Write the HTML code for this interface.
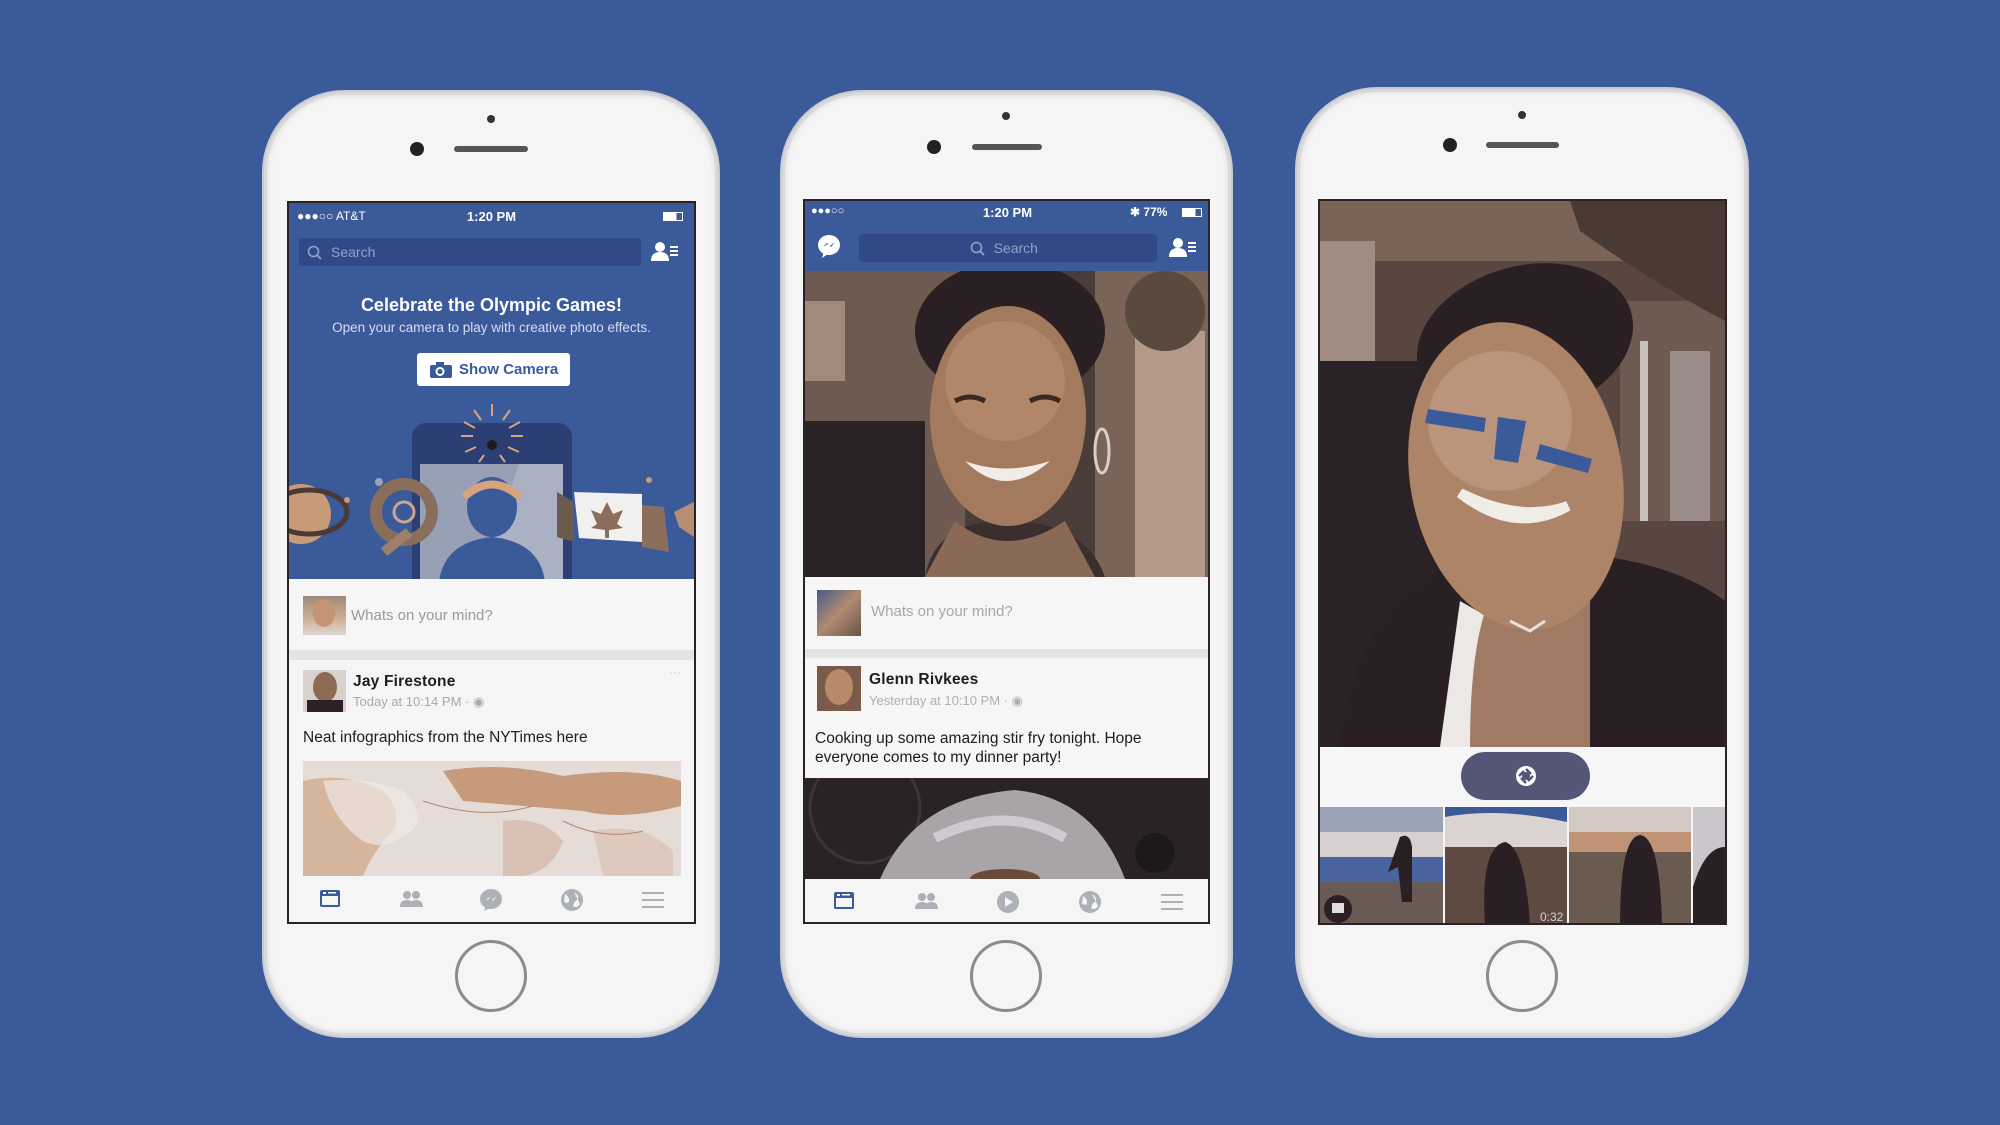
<!DOCTYPE html>
<html><head><meta charset="utf-8"><style>
*{margin:0;padding:0;box-sizing:border-box}
body{width:2000px;height:1125px;background:#3b5a9a;position:relative;overflow:hidden;font-family:"Liberation Sans",sans-serif}
.abs{position:absolute}
.phone{position:absolute;background:#f5f5f5;border:3px solid #d9d9dc;border-radius:80px;box-shadow:0 0 0 2px #c9cbd2, inset 0 0 6px #ddd}
.screen{position:absolute;background:#f5f5f5;border:2px solid #2a2224;overflow:hidden}
.cam{position:absolute;width:14px;height:14px;border-radius:50%;background:#222;}
.dot{position:absolute;width:8px;height:8px;border-radius:50%;background:#333}
.spk{position:absolute;height:6px;border-radius:3px;background:#555}
.home{position:absolute;width:72px;height:72px;border-radius:50%;border:3px solid #8a8a90}
.stat{position:absolute;color:#fff;font-size:13px;font-weight:bold}
.sep{position:absolute;left:0;right:0;height:10px;background:#e4e4e6}
</style></head><body>

<!-- PHONE 1 -->
<div class="phone" style="left:264px;top:92px;width:454px;height:944px"></div>
<div class="dot" style="left:487px;top:115px"></div>
<div class="cam" style="left:410px;top:142px"></div>
<div class="spk" style="left:454px;top:146px;width:74px"></div>
<div class="home" style="left:455px;top:940px"></div>
<div class="screen" style="left:287px;top:201px;width:409px;height:723px">
  <div class="abs" style="left:0;top:0;width:405px;height:376px;background:#3b5a9a"></div>
  <div class="stat" style="left:8px;top:6px;font-weight:normal;font-size:12px">●●●○○ AT&amp;T</div>
  <div class="stat" style="left:0;width:405px;text-align:center;top:6px">1:20 PM</div>
  <div class="abs" style="left:374px;top:9px;width:20px;height:9px;border:1px solid #fff;background:linear-gradient(90deg,#fff 70%,transparent 70%)"></div>
  <div class="abs" style="left:10px;top:35px;width:342px;height:28px;background:#2f4a86;border-radius:3px;color:#8fa3cc;font-size:14px;line-height:28px;padding-left:32px">Search</div>
  <svg class="abs" style="left:18px;top:42px" width="16" height="16"><circle cx="6.5" cy="6.5" r="5" fill="none" stroke="#8fa3cc" stroke-width="1.6"/><path d="M10 10 L14 14" stroke="#8fa3cc" stroke-width="1.8"/></svg>
  <svg class="abs" style="left:362px;top:38px" width="28" height="22"><circle cx="9" cy="6" r="5" fill="#fff"/><path d="M0 20 Q0 11 9 11 Q18 11 18 20Z" fill="#fff"/><rect x="19" y="5" width="8" height="2" fill="#fff"/><rect x="19" y="9" width="8" height="2" fill="#fff"/><rect x="19" y="13" width="8" height="2" fill="#fff"/></svg>
  <div class="abs" style="left:0;width:405px;top:92px;text-align:center;color:#fff;font-weight:bold;font-size:18px">Celebrate the Olympic Games!</div>
  <div class="abs" style="left:0;width:405px;top:117px;text-align:center;color:#d7def0;font-size:13.5px">Open your camera to play with creative photo effects.</div>
  <div class="abs" style="left:128px;top:150px;width:153px;height:33px;background:#fff;border-radius:3px;color:#3b5a9a;font-weight:bold;font-size:15px;line-height:33px;padding-left:42px">Show Camera</div>
  <svg class="abs" style="left:140px;top:158px" width="24" height="18"><rect x="1" y="4" width="22" height="13" rx="2" fill="#3b5a9a"/><rect x="7" y="1" width="8" height="4" fill="#3b5a9a"/><circle cx="11" cy="10.5" r="4.5" fill="#fff"/><circle cx="11" cy="10.5" r="2.5" fill="#3b5a9a"/></svg>
  <svg class="abs" style="left:0;top:199px" width="405" height="177">
    <rect x="123" y="21" width="160" height="170" rx="14" fill="#2c3f75"/>
    <rect x="131" y="62" width="143" height="120" fill="#97a0b4"/>
    <path d="M230 62 L274 62 L274 180 L190 180Z" fill="#aab1c2"/>
    <circle cx="203" cy="43" r="5" fill="#1e1a1e"/>
    <g stroke="#d8a37c" stroke-width="2"><path d="M203 2V14M185 8L192 18M221 8L214 18M175 20L186 26M231 20L220 26M172 34H184M234 34H222M176 50L187 45M230 50L219 45M190 60L195 53M216 60L211 53"/></g>
    <ellipse cx="203" cy="105" rx="25" ry="30" fill="#3b5a9a"/>
    <path d="M150 180 Q155 140 203 135 Q251 140 256 180Z" fill="#3b5a9a"/>
    <path d="M175 95 Q203 70 231 95" stroke="#d8a37c" stroke-width="8" fill="none"/>
    <circle cx="12" cy="112" r="30" fill="#c89a78"/>
    <ellipse cx="20" cy="110" rx="38" ry="22" fill="none" stroke="#4a3a34" stroke-width="5"/>
    <circle cx="115" cy="110" r="28" fill="none" stroke="#8a6e5c" stroke-width="12"/>
    <circle cx="115" cy="110" r="10" fill="none" stroke="#c9a58a" stroke-width="3"/>
    <path d="M95 150 L120 130" stroke="#a07f6a" stroke-width="10"/>
    <path d="M268 90 L285 100 L285 140 L268 135Z" fill="#6d5a4e"/>
    <path d="M285 90 L353 92 L353 140 L290 136Z" fill="#f2f0ee"/>
    <path d="M353 103 L375 105 L380 150 L353 145Z" fill="#8b6e5c"/>
    <path d="M318 100 L324 112 L334 108 L328 122 L334 126 L320 128 L320 136 L316 136 L316 128 L302 126 L308 122 L302 108 L312 112Z" fill="#8b6e5c"/>
    <path d="M385 110 L405 100 L405 135 L390 125Z" fill="#b88e72"/>
    <circle cx="90" cy="80" r="4" fill="#a0a3b8"/><circle cx="58" cy="98" r="3" fill="#c89a78"/><circle cx="360" cy="78" r="3" fill="#c89a78"/>
  </svg>
  <div class="abs" style="left:0;top:376px;width:405px;height:71px;background:#f6f6f6"></div>
  <div class="abs" style="left:14px;top:393px;width:43px;height:39px;background:linear-gradient(180deg,#9d8a7c,#c9a98e 50%,#dcd6d2)"></div>
  <div class="abs" style="left:24px;top:396px;width:22px;height:28px;border-radius:50%;background:#c49474"></div>
  <div class="abs" style="left:62px;top:404px;color:#9a9a9e;font-size:15px">Whats on your mind?</div>
  <div class="sep" style="top:447px"></div>
  <div class="abs" style="left:14px;top:467px;width:43px;height:42px;background:#d9d2cc;overflow:hidden">
    <div class="abs" style="left:10px;top:2px;width:24px;height:30px;border-radius:50%;background:#8d6a54"></div>
    <div class="abs" style="left:4px;top:30px;width:36px;height:12px;background:#2a2226"></div>
  </div>
  <div class="abs" style="left:64px;top:470px;color:#1d1d1f;font-size:15.5px;font-weight:bold;letter-spacing:.2px">Jay Firestone</div>
  <div class="abs" style="left:64px;top:491px;color:#a8a8ac;font-size:13px">Today at 10:14 PM · ◉</div>
  <div class="abs" style="left:380px;top:462px;color:#ccc;font-size:12px">···</div>
  <div class="abs" style="left:14px;top:526px;color:#1d1d1f;font-size:15.5px">Neat infographics from the NYTimes here</div>
  <svg class="abs" style="left:14px;top:558px" width="378" height="115">
    <rect width="378" height="115" fill="#e5dcd8"/>
    <path d="M0 20 Q40 10 80 30 Q100 50 90 70 Q70 90 60 115 L0 115Z" fill="#d6b59d"/>
    <path d="M140 10 Q200 0 260 15 Q330 5 378 20 L378 45 Q320 60 280 50 Q220 45 160 40Z" fill="#c89a7c"/>
    <path d="M20 20 Q60 15 100 30 Q130 60 100 75 Q80 90 60 80 Q30 60 20 20Z" fill="#f0e8e5" opacity=".7"/>
    <path d="M200 60 Q240 55 260 80 Q250 110 220 115 L200 115Z" fill="#d8c1b4"/>
    <path d="M290 70 Q340 60 370 90 L370 115 L300 115Z" fill="#ddc9bd"/>
    <path d="M120 40 Q180 60 230 45 M260 60 Q300 80 340 70" stroke="#b08870" fill="none"/>
  </svg>
  <svg class="abs" style="left:0;top:676px" width="405" height="45">
    <g transform="translate(31,11)"><rect x="0" y="0" width="20" height="17" rx="2" fill="#3b5a9a"/><rect x="2" y="6" width="16" height="9" fill="#f5f5f5"/><rect x="3" y="2" width="3" height="2" fill="#fff"/><rect x="8" y="2" width="8" height="1.5" fill="#fff"/></g>
    <g transform="translate(112,12)" fill="#aeb0b8"><circle cx="6" cy="4" r="4"/><path d="M-1 16 Q-1 9 6 9 Q13 9 13 16Z"/><circle cx="15" cy="4" r="4"/><path d="M9 16 Q9 9 15 9 Q22 9 22 16Z"/></g>
    <g transform="translate(191,10)"><ellipse cx="11" cy="10" rx="11" ry="10" fill="#aeb0b8"/><path d="M4 22 L6 16 L10 19Z" fill="#aeb0b8"/><path d="M5 12 L9 8 L12 11 L17 7 L13 12 L10 9Z" fill="#f5f5f5"/></g>
    <g transform="translate(272,10)"><circle cx="11" cy="11" r="11" fill="#aeb0b8"/><path d="M4 5 Q9 8 8 13 Q5 15 3 12Z M13 3 Q18 6 17 10 Q13 12 12 17 Q16 20 19 15" fill="#f5f5f5"/></g>
    <g transform="translate(353,13)" fill="#aeb0b8"><rect width="22" height="2"/><rect y="7" width="22" height="2"/><rect y="14" width="22" height="2"/></g>
  </svg>
</div>

<!-- PHONE 2 -->
<div class="phone" style="left:782px;top:92px;width:449px;height:944px"></div>
<div class="dot" style="left:1002px;top:112px"></div>
<div class="cam" style="left:927px;top:140px"></div>
<div class="spk" style="left:972px;top:144px;width:70px"></div>
<div class="home" style="left:970px;top:940px"></div>
<div class="screen" style="left:803px;top:199px;width:407px;height:725px">
  <div class="abs" style="left:0;top:0;width:405px;height:70px;background:#3b5a9a"></div>
  <div class="stat" style="left:6px;top:4px;font-weight:normal;font-size:11px">●●●○○</div>
  <div class="stat" style="left:0;width:405px;text-align:center;top:4px">1:20 PM</div>
  <div class="stat" style="left:325px;top:4px;font-size:12px">✱ 77%</div>
  <div class="abs" style="left:377px;top:7px;width:20px;height:9px;border:1px solid #fff;background:linear-gradient(90deg,#fff 70%,transparent 70%)"></div>
  <div class="abs" style="left:54px;top:33px;width:298px;height:28px;background:#2f4a86;border-radius:3px;color:#8fa3cc;font-size:14px;line-height:28px;text-align:center">&nbsp;&nbsp;&nbsp;&nbsp;Search</div>
  <svg class="abs" style="left:165px;top:40px" width="16" height="16"><circle cx="6.5" cy="6.5" r="5" fill="none" stroke="#8fa3cc" stroke-width="1.6"/><path d="M10 10 L14 14" stroke="#8fa3cc" stroke-width="1.8"/></svg>
  <svg class="abs" style="left:13px;top:33px" width="24" height="26"><ellipse cx="11" cy="11" rx="11" ry="10" fill="#fff"/><path d="M4 24 L6 17 L10 20Z" fill="#fff"/><path d="M5 13 L9 9 L12 12 L17 8 L13 13 L10 10Z" fill="#3b5a9a"/></svg>
  <svg class="abs" style="left:364px;top:36px" width="28" height="22"><circle cx="9" cy="6" r="5" fill="#fff"/><path d="M0 20 Q0 11 9 11 Q18 11 18 20Z" fill="#fff"/><rect x="19" y="5" width="8" height="2" fill="#fff"/><rect x="19" y="9" width="8" height="2" fill="#fff"/><rect x="19" y="13" width="8" height="2" fill="#fff"/></svg>
  <svg class="abs" style="left:0;top:70px" width="405" height="306">
    <rect width="405" height="306" fill="#4a3c38"/>
    <rect x="0" y="0" width="160" height="306" fill="#6e5a50"/>
    <rect x="0" y="150" width="120" height="156" fill="#2b2226"/>
    <rect x="290" y="0" width="115" height="306" fill="#7a6458"/>
    <rect x="330" y="60" width="70" height="246" fill="#b39a8a"/>
    <circle cx="360" cy="40" r="40" fill="#5a4a3e"/>
    <rect x="0" y="30" width="40" height="80" fill="#a08a7c"/>
    <path d="M120 306 Q130 250 200 250 Q280 250 300 306Z" fill="#3a2e2e"/>
    <ellipse cx="205" cy="60" rx="95" ry="70" fill="#2a2024"/>
    <ellipse cx="203" cy="145" rx="78" ry="110" fill="#a47a5e"/>
    <ellipse cx="200" cy="110" rx="60" ry="60" fill="#b48a6c" opacity=".8"/>
    <path d="M150 130 Q165 122 180 130 M225 130 Q240 122 255 130" stroke="#3a2a24" stroke-width="5" fill="none"/>
    <path d="M160 190 Q200 230 245 190 Q200 205 160 190Z" fill="#f2ece8"/>
    <path d="M150 250 Q200 290 260 250 L290 306 L120 306Z" fill="#8a6a56"/>
    <ellipse cx="297" cy="180" rx="7" ry="22" fill="none" stroke="#d8d0c8" stroke-width="3"/>
  </svg>
  <div class="abs" style="left:0;top:376px;width:405px;height:72px;background:#f6f6f6"></div>
  <div class="abs" style="left:12px;top:389px;width:44px;height:46px;background:linear-gradient(135deg,#4a5a8a,#b08a70 50%,#6a5448)"></div>
  <div class="abs" style="left:66px;top:402px;color:#a8a8ac;font-size:15px">Whats on your mind?</div>
  <div class="sep" style="top:448px;height:9px"></div>
  <div class="abs" style="left:0;top:457px;width:405px;height:120px;background:#f6f6f6"></div>
  <div class="abs" style="left:12px;top:465px;width:44px;height:45px;background:#7a5a48"></div>
  <div class="abs" style="left:20px;top:468px;width:28px;height:36px;border-radius:50%;background:#b88a6a"></div>
  <div class="abs" style="left:64px;top:470px;color:#1d1d1f;font-size:15.5px;font-weight:bold;letter-spacing:.2px">Glenn Rivkees</div>
  <div class="abs" style="left:64px;top:492px;color:#b0b0b4;font-size:13px">Yesterday at 10:10 PM · ◉</div>
  <div class="abs" style="left:10px;top:528px;color:#1d1d1f;font-size:15.5px;line-height:19px">Cooking up some amazing stir fry tonight. Hope<br>everyone comes to my dinner party!</div>
  <svg class="abs" style="left:0;top:577px" width="405" height="101">
    <rect width="405" height="101" fill="#2a2226"/>
    <circle cx="60" cy="30" r="55" fill="none" stroke="#3c3438" stroke-width="3"/>
    <path d="M75 101 Q110 20 210 12 Q290 20 320 101Z" fill="#a9a4a8"/>
    <path d="M130 60 Q200 25 260 60" stroke="#e6e6ea" stroke-width="10" fill="none" opacity=".6"/>
    <ellipse cx="200" cy="101" rx="35" ry="10" fill="#6a4a38"/>
    <circle cx="350" cy="75" r="20" fill="#1d181a"/>
  </svg>
  <svg class="abs" style="left:0;top:678px" width="405" height="45">
    <rect width="405" height="45" fill="#f5f5f5"/>
    <g transform="translate(29,13)"><rect x="0" y="0" width="20" height="17" rx="2" fill="#3b5a9a"/><rect x="2" y="6" width="16" height="9" fill="#f5f5f5"/><rect x="3" y="2" width="3" height="2" fill="#fff"/><rect x="8" y="2" width="8" height="1.5" fill="#fff"/></g>
    <g transform="translate(111,14)" fill="#aeb0b8"><circle cx="6" cy="4" r="4"/><path d="M-1 16 Q-1 9 6 9 Q13 9 13 16Z"/><circle cx="15" cy="4" r="4"/><path d="M9 16 Q9 9 15 9 Q22 9 22 16Z"/></g>
    <g transform="translate(192,12)"><circle cx="11" cy="11" r="11" fill="#aeb0b8"/><path d="M8 6 L16 11 L8 16Z" fill="#f5f5f5"/></g>
    <g transform="translate(274,12)"><circle cx="11" cy="11" r="11" fill="#aeb0b8"/><path d="M4 5 Q9 8 8 13 Q5 15 3 12Z M13 3 Q18 6 17 10 Q13 12 12 17 Q16 20 19 15" fill="#f5f5f5"/></g>
    <g transform="translate(356,15)" fill="#aeb0b8"><rect width="22" height="2"/><rect y="7" width="22" height="2"/><rect y="14" width="22" height="2"/></g>
  </svg>
</div>

<!-- PHONE 3 -->
<div class="phone" style="left:1297px;top:89px;width:450px;height:947px"></div>
<div class="dot" style="left:1518px;top:111px"></div>
<div class="cam" style="left:1443px;top:138px"></div>
<div class="spk" style="left:1486px;top:142px;width:73px"></div>
<div class="home" style="left:1486px;top:940px"></div>
<div class="screen" style="left:1318px;top:199px;width:409px;height:726px">
  <svg class="abs" style="left:0;top:0" width="405" height="546">
    <rect width="405" height="546" fill="#5a4640"/>
    <rect x="0" y="0" width="405" height="60" fill="#7a6458"/>
    <rect x="0" y="40" width="55" height="120" fill="#a08c80"/>
    <rect x="0" y="160" width="120" height="386" fill="#2a2226"/>
    <rect x="300" y="100" width="105" height="220" fill="#6e5a50"/>
    <rect x="320" y="140" width="8" height="180" fill="#c8c0bc"/>
    <rect x="350" y="150" width="40" height="170" fill="#9a8c88"/>
    <path d="M250 0 L405 0 L405 120 Q330 80 260 30Z" fill="#4a3a34"/>
    <path d="M20 546 Q40 360 200 350 Q340 350 405 400 L405 546Z" fill="#2a2024"/>
    <path d="M120 546 L140 400 L175 420 L200 546Z" fill="#ece8e6"/>
    <path d="M150 546 Q150 400 190 370 Q240 390 270 380 L270 546Z" fill="#a07a62"/>
    <ellipse cx="205" cy="140" rx="110" ry="75" fill="#2a2024" transform="rotate(-15 205 140)"/>
    <ellipse cx="196" cy="275" rx="106" ry="155" fill="#ae8468" transform="rotate(-10 196 275)"/>
    <ellipse cx="180" cy="220" rx="72" ry="70" fill="#be9a80" opacity=".8"/>
    <path d="M108 208 L166 217 L164 231 L105 222Z" fill="#3b5a9a"/>
    <path d="M178 216 L206 220 L198 262 L174 258Z" fill="#3b5a9a"/>
    <path d="M220 243 L272 258 L268 272 L216 258Z" fill="#3b5a9a"/>
    <path d="M140 292 Q195 335 248 305 Q200 322 140 292Z" fill="#f0ece8" stroke="#f0ece8" stroke-width="10"/>
    <path d="M190 420 L210 430 L225 420" stroke="#e8e0dc" stroke-width="3" fill="none"/>
  </svg>
  <div class="abs" style="left:0;top:546px;width:405px;height:61px;background:#f6f6f6"></div>
  <div class="abs" style="left:141px;top:551px;width:129px;height:48px;border-radius:24px;background:#545676"></div>
  <svg class="abs" style="left:194px;top:563px" width="24" height="24"><circle cx="12" cy="12" r="10" fill="#fff"/><path d="M12 5 L17 10 M19 12 L14 17 M12 19 L7 14 M5 12 L10 7" stroke="#545676" stroke-width="2.5"/><circle cx="12" cy="12" r="4" fill="#545676"/></svg>
  <svg class="abs" style="left:0;top:606px" width="405" height="118">
    <rect x="0" y="0" width="123" height="118" fill="#6a5a54"/>
    <rect x="0" y="0" width="123" height="30" fill="#9aa2b6"/>
    <rect x="0" y="25" width="123" height="25" fill="#d8d0d0"/>
    <rect x="0" y="50" width="123" height="25" fill="#4a64a0"/>
    <path d="M80 30 Q90 25 92 40 L92 95 L82 95 L78 60 L68 65Z" fill="#2a2024"/>
    <rect x="125" y="0" width="122" height="118" fill="#5e4a40"/>
    <rect x="125" y="0" width="122" height="20" fill="#3b5a9a"/>
    <path d="M125 10 Q180 0 247 15 L247 40 L125 40Z" fill="#dcd4d2"/>
    <path d="M165 118 Q160 40 185 35 Q205 40 210 118Z" fill="#2a2024"/>
    <rect x="249" y="0" width="122" height="118" fill="#6a5a50"/>
    <rect x="249" y="0" width="122" height="30" fill="#d4c8c4"/>
    <rect x="249" y="25" width="122" height="20" fill="#c09276"/>
    <path d="M300 118 Q300 30 320 28 Q340 30 342 118Z" fill="#2a2024"/>
    <rect x="373" y="0" width="32" height="118" fill="#cbc6cc"/>
    <path d="M373 118 L373 80 Q385 40 405 40 L405 118Z" fill="#2a2024"/>
    <rect x="123" width="2" height="118" fill="#f5f5f5"/><rect x="247" width="2" height="118" fill="#f5f5f5"/><rect x="371" width="2" height="118" fill="#f5f5f5"/>
    <circle cx="18" cy="102" r="14" fill="#2a2024"/><rect x="12" y="96" width="12" height="10" fill="#ddd"/>
    <text x="220" y="114" fill="#cfd0d8" font-size="12" font-family="Liberation Sans">0:32</text>
  </svg>
</div>
</body></html>
